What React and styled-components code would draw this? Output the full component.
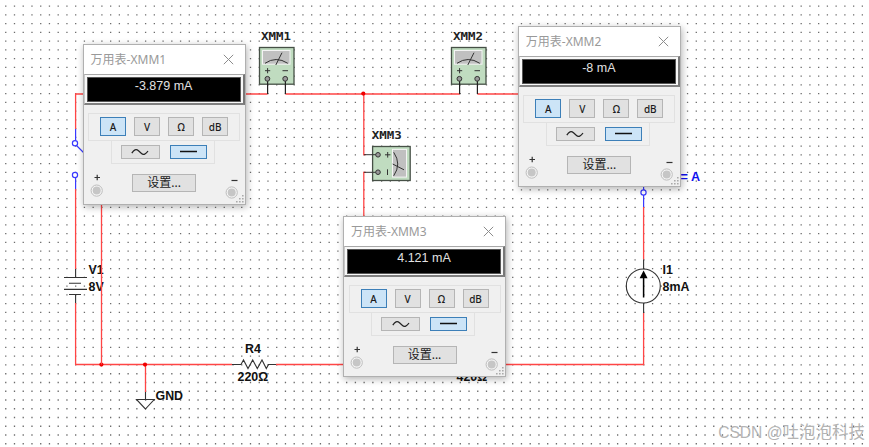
import React from 'react';
import styled, { createGlobalStyle } from 'styled-components';

const GlobalStyle = createGlobalStyle`
    body {
        margin: 0;
        background: white;
        overflow: hidden;
    }
    * {
        box-sizing: border-box;
    }
`;

const Workspace = styled.main`
    position: relative;
    width: 869px;
    height: 447px;
    overflow: hidden;
    background: white;
    font-family: 'Noto Sans', 'Noto Sans CJK SC', sans-serif;
`;

const Sheet = styled.svg`
    display: block;
`;

const Label = styled.text`
    font-family: 'Liberation Sans', Arial, sans-serif;
    font-weight: bold;
    font-size: ${props => props.$size || 12.4}px;
    fill: ${props => props.$color || '#111'};
`;

const MeterLabel = styled.text`
    font-family: 'DejaVu Sans Mono', monospace;
    font-weight: bold;
    font-size: 10.5px;
    fill: #222;
`;

// floating multimeter window, placed freely over the sheet
const Window = styled.section`
    position: absolute;
    left: ${props => props.$x}px;
    top: ${props => props.$y}px;
    width: 163px;
    height: 161px;
    display: flex;
    flex-direction: column;
    border: 1px solid #b0b0b0;
    background: #f0f0f0;
    box-shadow: 1px 2px 7px rgba(0, 0, 0, 0.3);
`;

const TitleBar = styled.header`
    display: flex;
    align-items: center;
    justify-content: space-between;
    height: 29px;
    padding: 0 11px 0 7px;
    background: white;
    color: #999;
    font-size: 12px;
    line-height: 28px;
    white-space: nowrap;
`;

const Display = styled.div`
    height: 31px;
    padding: 2px;
    background: #f8f8f8;
    border: 1px solid #8a8a8a;
    border-width: 1px 2px 2px 1px;
    border-color: #a8a8a8 #777 #808080 #c8c8c8;
`;

const Readout = styled.div`
    height: 25px;
    border: 1px solid #555;
    background: black;
    color: #e2e2e2;
    font-family: 'Liberation Sans', Arial, sans-serif;
    font-size: 12.5px;
    line-height: 17px;
    text-align: center;
`;

const Panel = styled.div`
    display: flex;
    flex-direction: column;
    align-items: center;
    padding-top: 8px;
`;

const ModeGroup = styled.div`
    display: flex;
    gap: 8px;
    width: 152px;
    height: 28px;
    padding: 3px 0 0 11px;
    border: 1px solid #e1e1e1;
`;

const WaveGroup = styled.div`
    display: flex;
    gap: 10px;
    width: 104px;
    height: 23px;
    padding: 4px 0 0 9px;
    border: 1px solid #e1e1e1;
    border-top: none;
    margin-right: 3px;
`;

const Button = styled.button`
    display: flex;
    align-items: center;
    justify-content: center;
    width: ${props => props.$w}px;
    height: ${props => props.$h}px;
    flex: none;
    padding: 0;
    border: 1px solid ${props => props.$active ? '#3c7fb8' : '#b5b5b5'};
    background: ${props => props.$active ? '#cce4f7' : '#e1e1e1'};
    color: #1b1b1b;
    font-family: 'Noto Sans', 'Noto Sans CJK SC', sans-serif;
    font-size: ${props => props.$font || 10}px;
    font-weight: ${props => props.$font ? 400 : 500};
    line-height: 1;
`;

const Footer = styled.div`
    display: flex;
    justify-content: space-between;
    align-items: flex-start;
    width: 100%;
    padding: 10px 6px 0 6px;
`;

const Terminal = styled.div`
    display: flex;
    margin-top: ${props => props.$drop}px;
`;

const Grip = styled.svg`
    position: absolute;
    right: 0;
    bottom: 0;
`;

const Watermark = styled.div`
    position: absolute;
    right: 4px;
    bottom: 2px;
    color: #b4b4b4;
    font-family: 'Liberation Sans', 'Noto Sans CJK SC', sans-serif;
    font-size: 15.6px;
    line-height: 24px;
    white-space: nowrap;
`;

const WatermarkName = styled.span`
    font-family: 'Noto Sans CJK SC', sans-serif;
    font-size: 16.5px;
`;

const rows = Array.from({ length: 51 }, (_, i) => 6.1 + i * 8.753);

function Grid() {
    return (
        <g stroke="#6c6c6c" strokeWidth="1.3" strokeDasharray="1.3 7.441">
            {rows.map(y => <line key={y} x1="5.1" x2="869" y1={y} y2={y} />)}
        </g>
    )
}

function Wires() {
    return (
        <>
            <g fill="none" stroke="#ff4545" strokeWidth="1.3">
                <path d="M75.6 129V94H267.6M285.5 94H460M477.5 94H520" />
                <path d="M363.8 94V154.7H366M363.8 218V172.3H366" />
                <path d="M75.6 189V269M75.6 303V364.5H232M276 364.5H643.6V313M643.6 259.5V207" />
                <path d="M145.5 364.5V392" />
            </g>
            <g fill="#f00000">
                <circle cx="363.3" cy="93.6" r="2.1" />
                <circle cx="101.4" cy="364.6" r="2.1" />
                <circle cx="145" cy="364.6" r="2.1" />
            </g>
            <g fill="none" stroke="#3a3aff" strokeWidth="1.2">
                <path d="M75.6 129V140.5M76.5 145.5L84 153M75.6 178V189M643.6 186V190M643.6 195V207" />
                <circle cx="75" cy="143.3" r="2.6" fill="white" />
                <circle cx="75" cy="175" r="2.6" fill="white" />
                <circle cx="643.5" cy="192.5" r="2.6" fill="white" />
            </g>
        </>
    )
}

function Parts() {
    return (
        <g fill="none" stroke="#333" strokeWidth="1.1">
            <path d="M75.6 269V277.5M64 277.5H87M69 283.2H81M64 289.4H87M69 294.5H81M75.6 294.5V303" />
            <path d="M232 364.5H241L243.5 360L248 368.5L252.7 360L257.3 368.5L262 360L266.3 368.5L268.5 364.5H276" />
            <path d="M145.5 392V399.5M136.5 399.5H154.2L145.4 409Z" />
            <circle cx="643.3" cy="286" r="17" />
            <path d="M643.6 259.5V269M643.6 303V313" />
            <path d="M643.6 277V297.5" strokeWidth="1.5" stroke="black" />
            <path d="M643.6 270.5L647.6 278.2H639.6Z" fill="black" stroke="none" />
        </g>
    )
}

function MeterSymbol(props) {
    return (
        <g transform={`translate(${props.x} 47)`} fill="none" stroke="#333" strokeWidth="1">
            <rect x="0.5" y="0.5" width="34.5" height="36.7" fill="#c0dcc0" stroke="#465046" strokeWidth="1.3" />
            <rect x="3.5" y="3.5" width="27.5" height="13.7" fill="#c0c0c0" stroke="#f4f4f4" />
            <path d="M6 16.3Q17 8.7 28.8 16.3M23 5.7L16.8 18M6 23.7H11.2M8.6 21.1V26.3M23.5 23.7H29" />
            <path d="M8.6 32V47M26.4 32V47" stroke="#222" strokeWidth="1.2" />
            <circle cx="8.4" cy="31.8" r="2.4" fill="#999" />
            <circle cx="26.2" cy="31.8" r="2.4" fill="#999" />
        </g>
    )
}

function SideMeterSymbol() {
    return (
        <g fill="none" stroke="#333" strokeWidth="1">
            <rect x="372.6" y="146.5" width="37.6" height="34" fill="#c0dcc0" stroke="#465046" strokeWidth="1.3" />
            <rect x="392.5" y="149.4" width="14" height="27.7" fill="#c0c0c0" stroke="#f4f4f4" />
            <path d="M393.7 152.3Q401.8 164 393.7 175.8M392.7 164L404 169.8" />
            <path d="M385 154.8H390.4M387.7 152V157.6M387.5 169.3V175" />
            <path d="M364 154.7H378M364 172.3H378" />
            <circle cx="378" cy="154.8" r="2.3" fill="#999" />
            <circle cx="378" cy="172.2" r="2.3" fill="#999" />
        </g>
    )
}

function Labels() {
    return (
        <>
            <MeterLabel x="261" y="40" textLength="30" lengthAdjust="spacingAndGlyphs">XMM1</MeterLabel>
            <MeterLabel x="453" y="40" textLength="30" lengthAdjust="spacingAndGlyphs">XMM2</MeterLabel>
            <MeterLabel x="371.7" y="139" textLength="30" lengthAdjust="spacingAndGlyphs">XMM3</MeterLabel>
            <Label x="88.6" y="273.7">V1</Label>
            <Label x="88.6" y="291">8V</Label>
            <Label x="245" y="353.4">R4</Label>
            <Label x="237.5" y="381">220Ω</Label>
            <Label x="456.5" y="381">420Ω</Label>
            <Label x="155.5" y="399.7">GND</Label>
            <Label x="662.5" y="273.7">I1</Label>
            <Label x="662.5" y="291">8mA</Label>
            <Label x="680.5" y="181.4" $color="#1010f0" $size={12.6}>= A</Label>
        </>
    )
}

function TerminalDot(props) {
    return (
        <Terminal $drop={props.drop}>
            <svg width="14" height="23" viewBox="0 0 14 23" fill="none">
                <path d={props.positive ? 'M4.5 3.5H10M7.2 0.8V6.2' : 'M6.5 3.5H12.5'} stroke="#333" strokeWidth="1.2" />
                <circle cx="6.7" cy={props.positive ? 16.6 : 15.5} r="5.6" fill="#f7f7f7" stroke="#bcbcbc" />
                <circle cx="6.7" cy={props.positive ? 16.6 : 15.5} r="4" fill="#c6c6c6" />
            </svg>
        </Terminal>
    )
}

function Multimeter(props) {
    return (
        <Window $x={props.x} $y={props.y}>
            <TitleBar>
                <span>万用表-{props.name}</span>
                <svg width="11" height="11" viewBox="0 0 11 11" stroke="#8c8c8c" strokeWidth="1">
                    <path d="M0.8 0.8L10.2 10.2M10.2 0.8L0.8 10.2" />
                </svg>
            </TitleBar>
            <Display>
                <Readout>{props.value}</Readout>
            </Display>
            <Panel>
                <ModeGroup>
                    <Button $w={26} $h={19} $active>A</Button>
                    <Button $w={26} $h={19}>V</Button>
                    <Button $w={26} $h={19}>Ω</Button>
                    <Button $w={26} $h={19}>dB</Button>
                </ModeGroup>
                <WaveGroup>
                    <Button $w={39} $h={14}>
                        <svg width="18" height="8" viewBox="0 0 18 8" fill="none" stroke="#222" strokeWidth="1.2">
                            <path d="M0.8 5.2C3 1.8 5 0.5 7.5 2.8L10.5 5.5C12.5 7.5 15 6 17 3" />
                        </svg>
                    </Button>
                    <Button $w={37} $h={14} $active>
                        <svg width="17" height="4" viewBox="0 0 17 4" stroke="#111" strokeWidth="1.5">
                            <path d="M0 1.5H17" />
                        </svg>
                    </Button>
                </WaveGroup>
                <Footer>
                    <TerminalDot positive drop={0} />
                    <Button $w={64} $h={18} $font={12}>设置...</Button>
                    <TerminalDot drop={3} />
                </Footer>
            </Panel>
            <Grip width="10" height="10" viewBox="0 0 10 10" fill="#aaa">
                <path d="M7 1h1.6v1.6H7zM4 4h1.6v1.6H4zM7 4h1.6v1.6H7zM1 7h1.6v1.6H1zM4 7h1.6v1.6H4zM7 7h1.6v1.6H7z" />
            </Grip>
        </Window>
    )
}

export default function App() {
    return (
        <Workspace>
            <GlobalStyle />
            <Sheet width="869" height="447" viewBox="0 0 869 447">
                <Grid />
                <Wires />
                <Parts />
                <MeterSymbol x={259} />
                <MeterSymbol x={451} />
                <SideMeterSymbol />
                <Labels />
                {/* this wire runs over the battery labels */}
                <path d="M101.5 204V364.5" stroke="#ff4545" strokeWidth="1.3" />
            </Sheet>
            <Multimeter x={82.6} y={44.4} name="XMM1" value="-3.879 mA" />
            <Multimeter x={517.8} y={26} name="XMM2" value="-8 mA" />
            <Multimeter x={343} y={216.4} name="XMM3" value="4.121 mA" />
            <Watermark>CSDN @<WatermarkName>吐泡泡科技</WatermarkName></Watermark>
        </Workspace>
    )
}
